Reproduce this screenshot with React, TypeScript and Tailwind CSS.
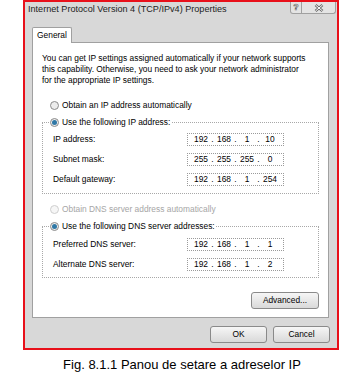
import React from 'react';

const Radio = ({ checked, disabled }: { checked?: boolean; disabled?: boolean }) => (
  <span
    className={`w-[9px] h-[9px] rounded-full border flex items-center justify-center shrink-0 ${
      disabled ? 'border-[#cfcfcf] bg-[#f6f6f6]' : 'border-[#8c8c8c] bg-[#ececec]'
    }`}
  >
    {checked && <span className="w-[5px] h-[5px] rounded-full bg-[#2f78a6]" />}
  </span>
);

const IpField = ({ parts }: { parts: string[] }) => (
  <div className="w-[97px] h-[13px] border border-dotted border-[#9a9a9a] bg-white flex items-center pl-[4px] leading-none">
    {parts.map((p, i) => (
      <React.Fragment key={i}>
        <span className="w-[18px] text-center">{p}</span>
        {i < 3 && <span className="w-[5px] text-center">.</span>}
      </React.Fragment>
    ))}
  </div>
);

const FieldRow = ({ label, parts }: { label: string; parts: string[] }) => (
  <div className="flex items-center h-[13px] pl-[10px]">
    <span className="w-[134px]">{label}</span>
    <IpField parts={parts} />
  </div>
);

const Button = ({ label, className = '' }: { label: string; className?: string }) => (
  <div
    className={`h-[17px] rounded-[3px] border border-[#8a8a8a] bg-linear-to-b from-[#f6f6f6] to-[#d9d9d9] flex items-center justify-center ${className}`}
  >
    {label}
  </div>
);

export default function App() {
  return (
    <div className="w-[364px] h-[379px] bg-white font-['Liberation_Sans',Arial,sans-serif] text-black">
      {/* Screenshot frame */}
      <div className="ml-[23px] w-[316px] h-[350px] border-2 border-[#e8101a] bg-[#d8d8d8] flex flex-col text-[8.4px]">
        {/* Title bar */}
        <div className="h-[16px] flex items-start">
          <span className="pl-[3px] h-[16px] flex items-center text-[9.1px] text-[#222]">
            Internet Protocol Version 4 (TCP/IPv4) Properties
          </span>
          <div className="ml-auto mr-[1px] flex">
            <div className="w-[12px] h-[12px] border border-[#a0a0a0] border-t-0 rounded-bl-[3px] bg-[#e4e4e4] flex items-center justify-center text-[9px] font-bold text-white [-webkit-text-stroke:0.6px_#6a6a6a]">
              ?
            </div>
            <div className="w-[34px] h-[12px] border border-l-0 border-[#a0a0a0] border-t-0 rounded-br-[3px] bg-[#e4e4e4] flex items-center justify-center">
              <svg width="10" height="8" viewBox="0 0 10 8">
                <path d="M1.5 1 L8.5 7 M8.5 1 L1.5 7" stroke="#6a6a6a" strokeWidth="2.6" />
                <path d="M1.5 1 L8.5 7 M8.5 1 L1.5 7" stroke="#ffffff" strokeWidth="1" />
              </svg>
            </div>
          </div>
        </div>

        {/* Tabs + panel */}
        <div className="pt-[9px] pl-[7px]">
          <div className="relative -mb-px w-[40px] h-[16px] bg-white border border-b-0 border-[#a0a0a0] rounded-t-[2px] flex items-center justify-center">
            General
          </div>
          <div className="w-[297px] h-[276px] bg-white border border-[#a0a0a0] pt-[10px] px-[9px]">
            <p className="leading-[11px]">
              You can get IP settings assigned automatically if your network supports
              <br />
              this capability. Otherwise, you need to ask your network administrator
              <br />
              for the appropriate IP settings.
            </p>

            <div className="mt-[13px] h-[13px] pl-[8px] flex items-center gap-[3px]">
              <Radio />
              <span>Obtain an IP address automatically</span>
            </div>

            <fieldset className="mt-[4px] border border-dotted border-[#a8a8a8] pt-[4px] pb-[7px] flex flex-col gap-[7px]">
              <legend className="ml-[6px] px-[1px]">
                <span className="h-[13px] flex items-center gap-[3px]">
                  <Radio checked />
                  <span>Use the following IP address:</span>
                </span>
              </legend>
              <FieldRow label="IP address:" parts={['192', '168', '1', '10']} />
              <FieldRow label="Subnet mask:" parts={['255', '255', '255', '0']} />
              <FieldRow label="Default gateway:" parts={['192', '168', '1', '254']} />
            </fieldset>

            <div className="mt-[9px] h-[13px] pl-[8px] flex items-center gap-[3px] text-[#a6a6a6]">
              <Radio disabled />
              <span>Obtain DNS server address automatically</span>
            </div>

            <fieldset className="mt-[4px] border border-dotted border-[#a8a8a8] pt-[5px] pb-[6px] flex flex-col gap-[7px]">
              <legend className="ml-[6px] px-[1px]">
                <span className="h-[13px] flex items-center gap-[3px]">
                  <Radio checked />
                  <span>Use the following DNS server addresses:</span>
                </span>
              </legend>
              <FieldRow label="Preferred DNS server:" parts={['192', '168', '1', '1']} />
              <FieldRow label="Alternate DNS server:" parts={['192', '168', '1', '2']} />
            </fieldset>

            <div className="mt-[14px] flex justify-end">
              <Button label="Advanced..." className="w-[68px]" />
            </div>
          </div>
        </div>

        {/* Dialog buttons */}
        <div className="mt-[8px] pr-[7px] flex justify-end gap-[6px]">
          <Button label="OK" className="w-[57px]" />
          <Button label="Cancel" className="w-[57px]" />
        </div>
      </div>

      {/* Caption */}
      <div className="h-[29px] flex items-center justify-center text-[13px]">
        Fig. 8.1.1 Panou de setare a adreselor IP
      </div>
    </div>
  );
}
